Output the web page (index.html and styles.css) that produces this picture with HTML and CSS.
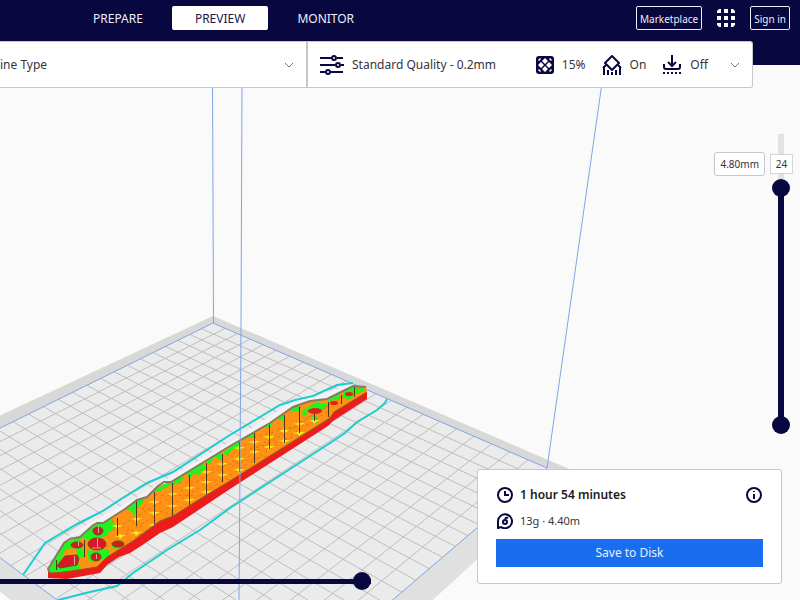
FILE: index.html
```html
<!DOCTYPE html>
<html lang="en">
<head>
<meta charset="utf-8">
<title>Print preview</title>
<link rel="stylesheet" href="styles.css">
</head>
<body>
<svg class="scene" aria-hidden="true">
  <defs>
    <clipPath id="face"><path d="M48 569L64 543L80 537L97 523L103 523L125 509L137 500L147 497L158 486L171 482L230 446L270 423L293 407L310 401L327 399L353 386L366 387L367 392L334 412L330 418L230 481L200 499L173 516L160 521L133 541L107 557L97 567L67 571L51 573Z"/></clipPath>
    <path id="star" d="M-6 0L-1 -1L0 -3L1 -1L6 -1L2 1L0 3L-1 1Z"/>
  </defs>
  <path fill="#d8d8d8" d="M213 316L574 471L237 778L-140 481Z"/>
  <path fill="#e0e0e0" d="M547 468L574 471L237 778L237 733ZM237 733L237 778L-140 481L-105 480Z"/>
  <path fill="#ebebeb" d="M213 323L547 468L237 733L-105 480Z"/>
  <path id="grid" class="grid"/>
  <path class="edge" d="M213 323L547 468L237 733L-105 480Z"/>
  <path class="edge" d="M212.500 80L213.500 323M602 83L547 468"/>
  <path fill="#f3f3f3" d="M62 540L95 520L125 504L150 489L230 442L290 403L320 394L355 383L327 401L230 448L100 525Z"/>
  <path class="skirt" d="M23 575L45 543L77 524L103 511L121 499L147 483L173 472L230 435L280 405Q296 399 313 396L337 385L353 383M387 399L385 403L377 410L357 422L345 433L330 443L230 508L200 530L167 550L133 573L117 586L90 592L58 600"/>
  <path fill="#ec1c1c" d="M48 569L51 572L97 566L107 556L160 520L200 498L330 417L334 411L367 391L367 399L333 421L328 426L230 489L200 509L173 527L160 533L141 546L130 553L119 557L107 565L100 573L67 579L48 578Z"/>
  <g clip-path="url(#face)">
    <path fill="#ff9214" d="M40 380H370V580H40Z"/>
    <path fill="#21f321" d="M48 570L64 540L82 535L78 548L66 549L60 562L72 558L77 573L50 575ZM78 536L97 520L106 524L108 535L97 539L88 540ZM100 523L110 517L116 527L108 533ZM118 513L136 499L146 497L141 505L137 508L135 515L128 509ZM151 493L170 480L184 476L181 483L168 486L160 491ZM186 473L203 462L206 469L199 475L193 473L190 479ZM206 462L221 451L222 461L215 457L210 464ZM223 453L239 440L240 450L232 449L228 456ZM240 441L254 430L255 438L247 438ZM257 430L270 422L284 413L283 421L275 418L270 428L264 427ZM289 410L299 403L300 412L293 411ZM302 411L316 402L328 404L323 410L312 408L303 418ZM312 415L318 416L318 423L313 424ZM321 399L340 391L340 399L330 401ZM345 390L357 385L366 390L356 394L349 400L342 397ZM76 546L83 549L84 558L77 557ZM87 550L96 551L109 549L109 558L98 561L89 561ZM112 543L121 540L120 549L112 548ZM57 566L75 561L82 568L60 573Z"/>
    <path fill="none" stroke="#df701c" stroke-dasharray="2 4" d="M113 530L370 382M106 547L340 398M130 541L330 410M112 521L145 538M136 507L172 514M155 495L205 496M173 483L235 479M200 471L268 456M227 455L299 436M254 437L316 422"/>
    <g id="stars" fill="#f3ee21"></g>
    <path fill="none" stroke="#513615" d="M56.500 560V570M84.500 540V557M117.500 518V536M136.500 499V526M154.500 492V525M172.500 483V517M189.500 475V506M206.500 463V497M222.500 454V482M239.500 441V472M254.500 433V463M269.500 425V449M284.500 415V443M299.500 407V433M314.500 410V421M328.500 402V417M341.500 395V404M354.500 387V397"/>
    <g fill="#d81825" stroke="#6d5012">
      <ellipse cx="98" cy="531" rx="5" ry="4"/><ellipse cx="77" cy="545" rx="6" ry="3"/>
      <ellipse cx="97" cy="544" rx="9" ry="6"/><ellipse cx="118" cy="544" rx="6" ry="3"/>
      <ellipse cx="96" cy="557" rx="5" ry="4"/><path d="M57 566L65 556L77 555L79 559L77 565L60 568Z"/>
    </g>
    <g fill="#e3201c">
      <ellipse cx="315" cy="411" rx="7" ry="3"/><ellipse cx="334" cy="403" rx="4" ry="2"/><ellipse cx="349" cy="394" rx="4" ry="2"/>
    </g>
    <path fill="none" stroke="#d8a6a0" d="M97.500 538V547M98.500 526V533M74.500 556V565M96.500 554V559M78.500 542V546M92 548H101"/>
  </g>
  <path fill="none" stroke="#8b7666" stroke-width="2" d="M50 573L48 569L64 543L70 539L80 537L92 526L97 523L103 523L125 509L137 500L147 497L158 486L164 482L171 482L230 446L270 423L293 407L310 401L327 399L353 386L366 387"/>
  <path fill="none" stroke="#87601b" d="M50 573L67 572L97 567L107 557L133 541L160 521L173 516L200 499L230 481L330 418L334 412L367 392"/>
  <path class="edge" d="M242 80L241 330L239 600L237 733"/>
</svg>

<header class="topbar">
  <nav class="stages">
    <button>PREPARE</button>
    <button class="active">PREVIEW</button>
    <button>MONITOR</button>
  </nav>
  <div class="account">
    <button class="outlined">Marketplace</button>
    <button class="apps" aria-label="Applications">
      <svg width="20" height="20" viewBox="0 0 20 20" fill="#fff"><path d="M3 1H5V5H1V3ZM8 1H12V5H8ZM15 1H17L19 3V5H15ZM1 8H5V12H1ZM8 8H12V12H8ZM15 8H19V12H15ZM1 15H5V19H3L1 17ZM8 15H12V19H8ZM15 15H19V17L17 19H15Z"/></svg>
    </button>
    <button class="outlined">Sign in</button>
  </div>
</header>

<section class="settings">
  <button class="view-type"><span>ine Type</span>
    <svg class="chevron" width="10" height="6" viewBox="0 0 10 6"><path d="M1 1L5 5L9 1"/></svg>
  </button>
  <button class="profile">
    <svg class="icon" width="24" height="20" viewBox="0 0 24 20"><path d="M0 3H11M17 3H23M0 10H15M21 10H24M0 17H5M11 17H23"/><circle cx="14" cy="3" r="2"/><circle cx="18" cy="10" r="2"/><circle cx="8" cy="17" r="2"/></svg>
    <span class="quality">Standard Quality - 0.2mm</span>
    <span class="item">
      <svg width="18" height="18" viewBox="0 0 18 18"><rect width="18" height="18" rx="3" fill="#08073f"/><path fill="#fff" d="M9 2L12 5L9 8L6 5ZM9 10L12 13L9 16L6 13ZM5 6L8 9L5 12L2 9ZM13 6L16 9L13 12L10 9ZM2 4L4 2L5 3L3 5ZM14 2L16 4L15 5L13 3ZM2 14L3 13L5 15L4 16ZM16 14L15 13L13 15L14 16Z"/></svg>15%</span>
    <span class="item">
      <svg class="icon" width="20" height="20" viewBox="0 0 20 20"><path stroke-linejoin="round" d="M10 1L17 8L10 15L3 8Z"/><path d="M2 12V20M18 12V20M6 15V20M14 15V20M10 17V20M1 13L4 10M19 13L16 10"/></svg>On</span>
    <span class="item">
      <svg class="icon" width="20" height="20" viewBox="0 0 20 20"><path d="M10 0V10M6 7L10 11L14 7M2 9V12Q2 14 4 14H16Q18 14 18 12V9"/><path stroke-dasharray="2 2" d="M1 18H19"/></svg>Off</span>
    <svg class="chevron" width="10" height="6" viewBox="0 0 10 6"><path d="M1 1L5 5L9 1"/></svg>
  </button>
</section>

<main class="stage">
  <section class="layers">
    <output class="height">4.80mm</output>
    <div class="layer-slider">
      <input type="range" aria-label="Bottom layer" min="0" max="100" value="0">
      <input type="range" aria-label="Top layer" min="0" max="100" value="84">
      <output class="number">24</output>
    </div>
  </section>
  <footer class="bottom">
    <input class="path-slider" type="range" aria-label="Path position" value="100">
    <section class="job">
      <div class="line time">
        <svg class="icon" width="16" height="16" viewBox="0 0 16 16"><circle cx="8" cy="8" r="7"/><path d="M8 4V8H12"/></svg>
        <strong>1 hour 54 minutes</strong>
        <button class="info" aria-label="Details"><svg class="icon" width="16" height="16" viewBox="0 0 16 16"><circle cx="8" cy="8" r="7"/><path d="M8 7V12M8 4V5"/></svg></button>
      </div>
      <div class="line">
        <svg class="icon" width="16" height="16" viewBox="0 0 16 16"><path d="M1 16V8A7 7 0 1 1 4 14L1 15"/><circle cx="8" cy="9" r="2"/><path d="M8 6Q9 4 11 5"/></svg>
        <span>13g · 4.40m</span>
      </div>
      <button class="save">Save to Disk</button>
    </section>
  </footer>
</main>
<script src="scene.js"></script>
</body>
</html>
```
FILE: styles.css
```css
* { box-sizing: border-box; }
body {
  margin: 0;
  min-height: 100vh;
  display: flex;
  flex-direction: column;
  position: relative;
  background: #fafafa;
  color: #35353b;
  font: 12px/16px "Noto Sans", sans-serif;
}
button {
  margin: 0;
  padding: 0;
  border: 0;
  background: none;
  color: inherit;
  font: inherit;
}
svg { display: block; flex: none; }
.scene {
  position: absolute;
  top: 0;
  left: 0;
  z-index: -1;
  width: 100%;
  height: 100%;
  overflow: hidden;
}
.grid { fill: none; stroke: #bebec0; }
.edge { fill: none; stroke: #7fa5e6; }
.skirt { fill: none; stroke: #1cccd0; stroke-width: 2; }
.icon { fill: none; stroke: #08073f; stroke-width: 2; }
.chevron { fill: none; stroke: #77777d; }

.topbar {
  height: 65px;
  padding: 6px 10px 0 70px;
  display: flex;
  justify-content: space-between;
  align-items: flex-start;
  background: #08073f;
  color: #eeeef8;
}
.stages { display: flex; gap: 6px; }
.stages button { height: 24px; padding: 1px 23px 0; border-radius: 2px; }
.stages .active { background: #fff; color: #19184b; }
.account { display: flex; align-items: center; gap: 14px; font-size: 10px; }
.outlined {
  height: 24px;
  padding: 1px 3px 0;
  border: 1px solid #eeeef8;
  border-radius: 2px;
}

.settings {
  display: grid;
  grid-template-columns: 306fr 446fr;
  height: 47px;
  margin: -24px 47px 0 0;
  background: #fff;
  border: 1px solid #c6c6cb;
  border-left: 0;
  border-radius: 0 3px 3px 0;
}
.settings button { padding-top: 1px; }
.view-type {
  display: flex;
  align-items: center;
  justify-content: space-between;
  padding-right: 12px;
}
.profile {
  display: flex;
  align-items: center;
  padding: 0 12px;
  border-left: 2px solid #c6c6cb;
}
.quality { margin: 0 auto 0 8px; }
.item { display: flex; align-items: center; gap: 8px; margin-right: 16px; }
.item + .chevron { margin-left: 6px; }

.stage { flex: 1; display: flex; flex-direction: column; justify-content: space-between; }
.layers {
  display: flex;
  justify-content: flex-end;
  gap: 7px;
  padding: 46px 10px 0 0;
}
.height {
  height: 24px;
  margin-top: 18px;
  padding: 3px 5px;
  background: #fff;
  border: 1px solid #c6c6cb;
  border-radius: 3px;
  font-size: 10px;
}
.layer-slider {
  display: grid;
  position: relative;
  width: 18px;
  height: 300px;
  background: linear-gradient(#e2e2e2 54px, #08073f 54px 291px, transparent 291px) center / 6px 100% no-repeat;
}
input[type="range"] {
  appearance: none;
  margin: 0;
  background: none;
}
.layer-slider input {
  grid-area: 1 / 1;
  writing-mode: vertical-lr;
  direction: rtl;
  width: 18px;
  height: 300px;
  pointer-events: none;
}
input[type="range"]::-webkit-slider-thumb {
  appearance: none;
  width: 18px;
  height: 18px;
  border-radius: 50%;
  background: #08073f;
  pointer-events: auto;
}
.number {
  position: absolute;
  top: 20px;
  left: -2px;
  width: 23px;
  height: 20px;
  background: #fff;
  border: 1px solid #d6d6d9;
  font-size: 10px;
  line-height: 18px;
  text-align: center;
}
.bottom {
  display: flex;
  justify-content: space-between;
  align-items: flex-end;
  padding: 0 18px 16px 0;
}
.bottom .path-slider {
  width: 371px;
  height: 18px;
  margin-bottom: -6px;
}
.path-slider::-webkit-slider-runnable-track {
  height: 18px;
  background: linear-gradient(#08073f, #08073f) center / 100% 5px no-repeat;
}
.job {
  width: 305px;
  padding: 14px 18px 16px;
  display: flex;
  flex-direction: column;
  background: #fff;
  border: 1px solid #c6c6cb;
  border-radius: 3px;
}
.line { display: flex; align-items: center; gap: 7px; height: 26px; padding: 0 1px; font-size: 11px; }
.time { height: 22px; margin-bottom: 2px; font-size: 12px; color: #19191e; }
.line strong { font-weight: 600; }
.info { margin-left: auto; }
.save { height: 28px; margin-top: 5px; background: #196ef0; color: #e8f1ff; }
```
FILE: scene.js
```js
// Build plate corners on screen: back, right, front, left.
const [a, b, c, d] = [[213, 323], [547, 468], [237, 733], [-105, 480]];
const dx1 = b[0] - c[0], dx2 = d[0] - c[0], dx3 = a[0] - b[0] + c[0] - d[0];
const dy1 = b[1] - c[1], dy2 = d[1] - c[1], dy3 = a[1] - b[1] + c[1] - d[1];
const det = dx1 * dy2 - dx2 * dy1;
const g = (dx3 * dy2 - dx2 * dy3) / det;
const h = (dx1 * dy3 - dx3 * dy1) / det;

function project(u, v) {
  const w = g * u + h * v + 1;
  const axis = i => (a[i] + (b[i] - a[i] + g * b[i]) * u + (d[i] - a[i] + h * d[i]) * v) / w;
  return axis(0) + " " + axis(1);
}

const cells = 22;
let path = "";
for (let i = 1; i < cells; i++) {
  const t = i / cells;
  path += `M${project(t, 0)}L${project(t, 1)}M${project(0, t)}L${project(1, t)}`;
}
document.getElementById("grid").setAttribute("d", path);

// Infill crossings on the sliced face.
const crossings = [
  [117, 526], [120, 536], [136, 519], [136, 533], [154, 513], [154, 525],
  [154, 502], [172, 494], [172, 506], [189, 488], [189, 500], [206, 472],
  [206, 482], [206, 492], [222, 464], [222, 475], [239, 448], [239, 459],
  [239, 470], [254, 442], [254, 452], [269, 437], [269, 447], [284, 431],
  [284, 441], [299, 424], [299, 433], [314, 421]
];
document.getElementById("stars").innerHTML = crossings
  .map(([x, y]) => `<use href="#star" x="${x}" y="${y}"/>`).join("");
```
